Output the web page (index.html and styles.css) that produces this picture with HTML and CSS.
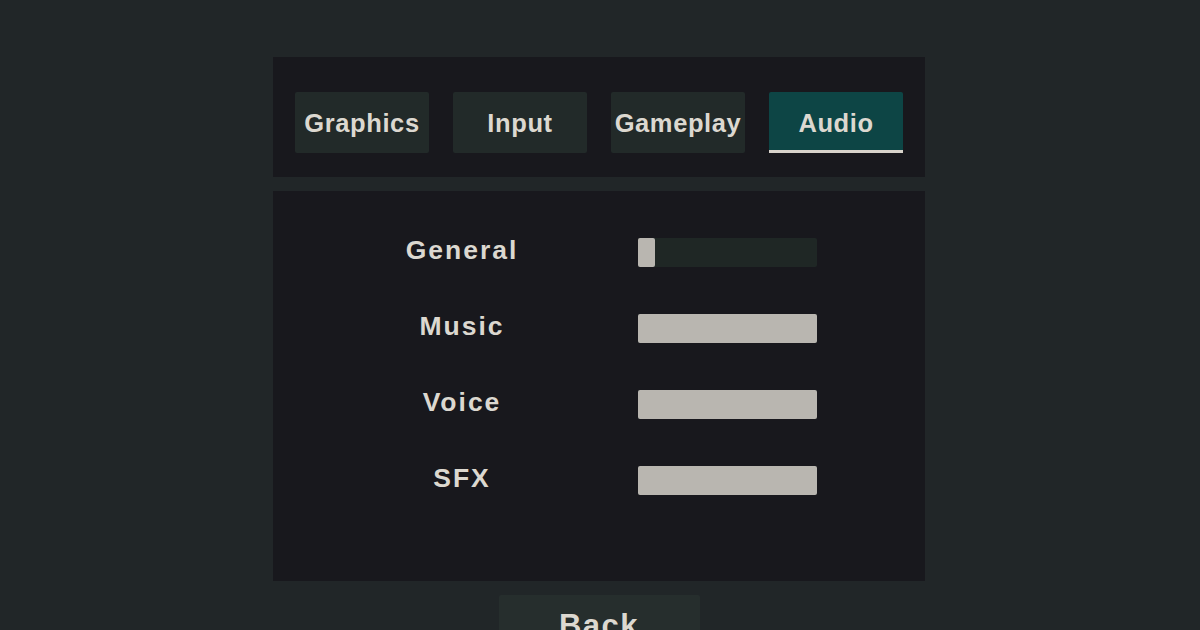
FILE: index.html
```html
<!DOCTYPE html>
<html>
<head>
<meta charset="utf-8">
<link rel="stylesheet" href="styles.css">
</head>
<body>
<div class="menu">
  <div class="tabs-panel">
    <div class="tab">Graphics</div>
    <div class="tab">Input</div>
    <div class="tab">Gameplay</div>
    <div class="tab active">Audio</div>
  </div>
  <div class="content-panel">
    <div class="row">
      <div class="label">General</div>
      <div class="slider"><div class="fill" style="width:17px"></div></div>
    </div>
    <div class="row">
      <div class="label">Music</div>
      <div class="slider"><div class="fill" style="width:100%"></div></div>
    </div>
    <div class="row">
      <div class="label">Voice</div>
      <div class="slider"><div class="fill" style="width:100%"></div></div>
    </div>
    <div class="row">
      <div class="label">SFX</div>
      <div class="slider"><div class="fill" style="width:100%"></div></div>
    </div>
  </div>
  <div class="back">Back</div>
</div>
</body>
</html>
```
FILE: styles.css
```css
html, body {
  margin: 0;
  padding: 0;
  background: #212628;
  height: 100%;
  overflow: hidden;
}
body {
  font-family: "Liberation Sans", Arial, sans-serif;
  font-weight: bold;
  color: #dcd8d0;
}
.menu {
  display: flex;
  flex-direction: column;
  align-items: center;
  padding-top: 57px;
  padding-right: 2px;
}
.tabs-panel {
  width: 652px;
  box-sizing: border-box;
  background: #18181d;
  padding: 35px 22px 24px;
  display: flex;
  gap: 24px;
}
.tab {
  width: 134px;
  height: 61px;
  box-sizing: border-box;
  background: #222a29;
  border-radius: 2px;
  display: flex;
  align-items: center;
  justify-content: center;
  padding-top: 2px;
  font-size: 25.5px;
  letter-spacing: 0.6px;
}
.tab.active {
  background: #0d4545;
  border-bottom: 3px solid #d8d3cb;
  border-radius: 2px 2px 0 0;
  padding-top: 4px;
}
.content-panel {
  margin-top: 14px;
  width: 652px;
  height: 390px;
  box-sizing: border-box;
  background: #18181d;
  padding: 46px 0 0 89px;
  display: flex;
  flex-direction: column;
  gap: 46px;
}
.row {
  display: flex;
  align-items: center;
  gap: 76px;
  height: 30px;
}
.label {
  width: 200px;
  text-align: center;
  font-size: 26.5px;
  letter-spacing: 2px;
  padding-bottom: 3px;
}
.slider {
  width: 179px;
  height: 29px;
  background: #1f2725;
  border-radius: 2px;
  display: flex;
}
.fill {
  height: 100%;
  background: #b9b6b0;
  border-radius: 2px;
}
.back {
  margin-top: 14px;
  width: 201px;
  height: 61px;
  background: #262e2d;
  border-radius: 2px;
  display: flex;
  align-items: center;
  justify-content: center;
  font-size: 31px;
  letter-spacing: 1.5px;
}
```
